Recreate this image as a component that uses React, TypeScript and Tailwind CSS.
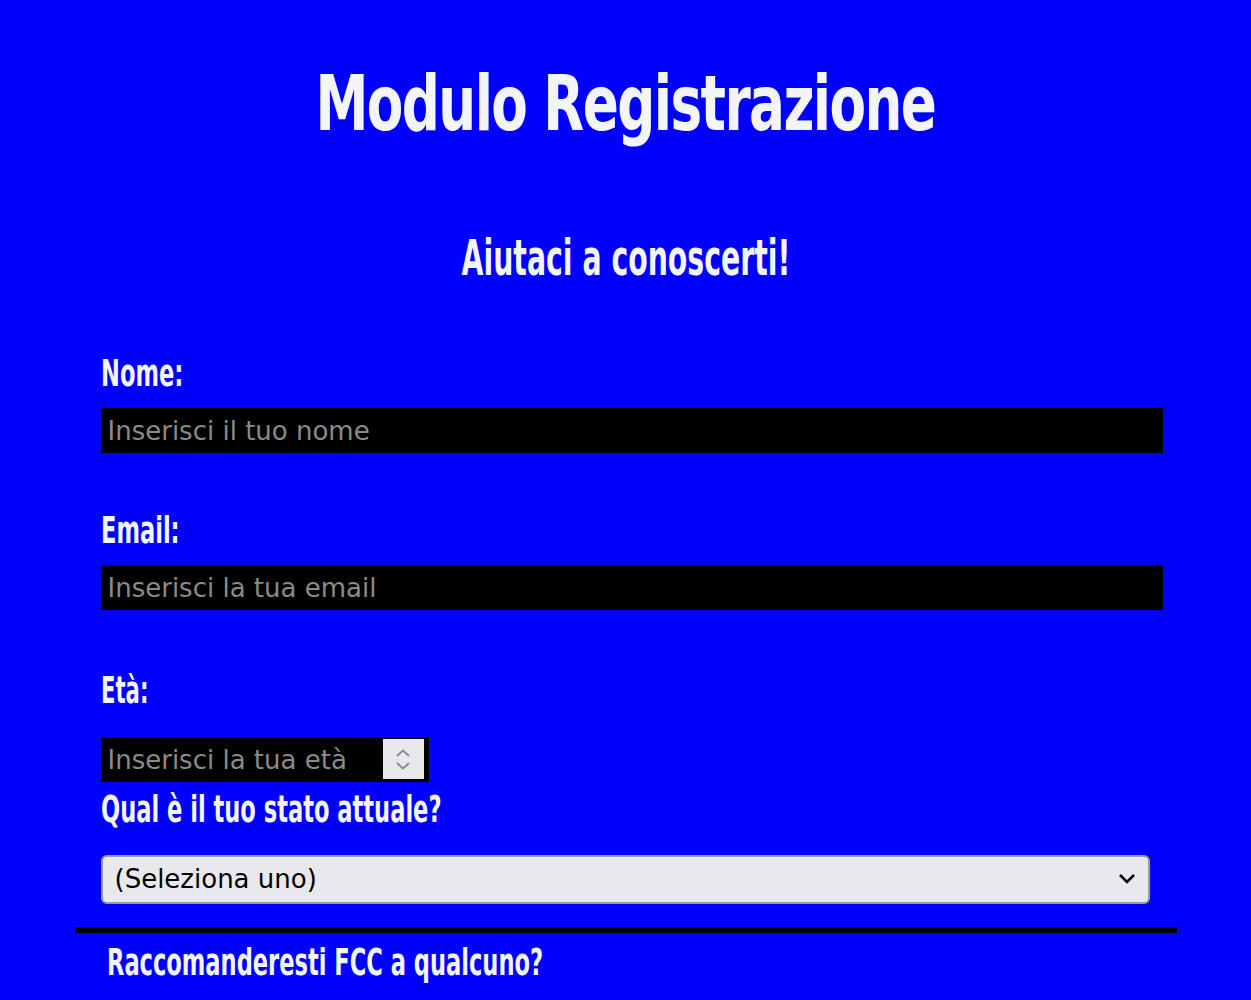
import { useState } from 'react';

const display = "font-['Liberation_Sans_Narrow','DejaVu_Sans_Condensed',sans-serif]";
const labelCls = `${display} block text-[38px] leading-[46px] font-bold`;
const squeeze = 'inline-block origin-left scale-x-[0.66]';

export default function App() {
  const [stato, setStato] = useState('');

  return (
    <div className="min-h-[1000px] bg-[#0000ff] text-[#f3f5f9] overflow-hidden">
      <h1 className={`${display} pt-[62px] text-center text-[76px] leading-[84px] font-bold tracking-[-2px]`}>
        <span className="inline-block scale-x-[0.778]">Modulo Registrazione</span>
      </h1>
      <p className={`${display} mt-[82px] text-center text-[50px] leading-[60px] font-bold`}>
        <span className="inline-block scale-x-[0.63]">Aiutaci a conoscerti!</span>
      </p>

      <form className="mx-auto mt-[62px] w-[1102px]">
        <div className="pl-[26px] pr-[14px]">
          <label className={labelCls} htmlFor="name">
            <span className={squeeze}>Nome:</span>
          </label>
          <input
            id="name"
            type="text"
            placeholder="Inserisci il tuo nome"
            className="mt-[12px] block h-[45px] w-full bg-black px-[7px] text-[26px] text-white font-['DejaVu_Sans',sans-serif] placeholder:text-[#8a8a8a] outline-none"
          />

          <label className={`${labelCls} mt-[54px]`} htmlFor="email">
            <span className={squeeze}>Email:</span>
          </label>
          <input
            id="email"
            type="email"
            placeholder="Inserisci la tua email"
            className="mt-[12px] block h-[45px] w-full bg-black px-[7px] text-[26px] text-white font-['DejaVu_Sans',sans-serif] placeholder:text-[#8a8a8a] outline-none"
          />

          <label className={`${labelCls} mt-[57px]`} htmlFor="age">
            <span className="inline-block origin-left scale-x-[0.62]">Età:</span>
          </label>
          <div className="relative mt-[24px] w-[328px]">
            <input
              id="age"
              type="number"
              placeholder="Inserisci la tua età"
              className="block h-[45px] w-full border-[3px] border-black bg-black pl-[4px] pr-[48px] text-[26px] text-white font-['DejaVu_Sans',sans-serif] placeholder:text-[#8a8a8a] outline-none [appearance:textfield] [&::-webkit-inner-spin-button]:appearance-none"
            />
            {/* spinner, drawn since headless chrome hides it */}
            <div className="pointer-events-none absolute right-[5px] top-[2px] flex h-[40px] w-[41px] flex-col items-center justify-center gap-[3px] bg-[#e9e8ed]">
              <svg width="16" height="10" viewBox="0 0 16 10">
                <path d="M2 8 L8 2.5 L14 8" fill="none" stroke="#8c8c8c" strokeWidth="2" />
              </svg>
              <svg width="16" height="10" viewBox="0 0 16 10">
                <path d="M2 2 L8 7.5 L14 2" fill="none" stroke="#8c8c8c" strokeWidth="2" />
              </svg>
            </div>
          </div>

          <label className={`${labelCls} mt-[4px]`} htmlFor="stato">
            <span className={squeeze}>Qual è il tuo stato attuale?</span>
          </label>
          <div className="relative mt-[23px] w-[1049px]">
            <select
              id="stato"
              value={stato}
              onChange={(e) => setStato(e.target.value)}
              className="block h-[49px] w-full appearance-none rounded-[6px] border-2 border-[#9a9a9a] bg-[#e9e8ed] pl-[12px] text-[26px] text-black font-['DejaVu_Sans',sans-serif]"
            >
              <option value="">(Seleziona uno)</option>
              <option value="studente">Studente</option>
              <option value="lavoro">Lavoro a tempo pieno</option>
              <option value="altro">Altro</option>
            </select>
            <svg className="pointer-events-none absolute right-[14px] top-[18px]" width="18" height="12" viewBox="0 0 18 12">
              <path d="M2 2 L9 9 L16 2" fill="none" stroke="black" strokeWidth="2.6" />
            </svg>
          </div>
        </div>

        <div className="mt-[23px] h-[6px] bg-black" />
        <p className={`${labelCls} pl-[32px] pt-[6px]`}>
          <span className={squeeze}>Raccomanderesti FCC a qualcuno?</span>
        </p>
      </form>
    </div>
  );
}
